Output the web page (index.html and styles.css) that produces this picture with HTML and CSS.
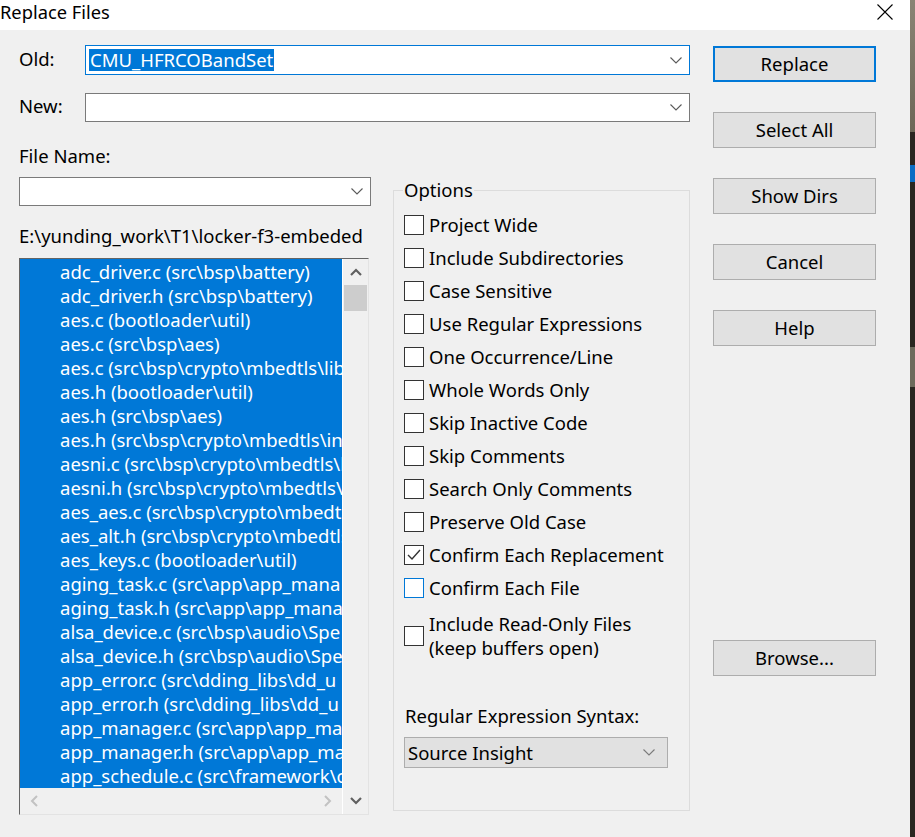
FILE: index.html
```html
<!DOCTYPE html>
<html>
<head>
<meta charset="utf-8">
<link rel="stylesheet" href="styles.css">
</head>
<body>
<div class="screen">
  <div class="dialog">
    <div class="titlebar">
      <span class="title">Replace Files</span>
      <svg class="close" width="16" height="16" viewBox="0 0 16 16"><path d="M0.5 0.5 L15.5 15.5 M15.5 0.5 L0.5 15.5" stroke="#000" stroke-width="1.1" fill="none"/></svg>
    </div>
    <div class="body">
      <div class="main">
        <div class="row row-old">
          <span class="lbl">Old:</span>
          <div class="combo combo-focus">
            <span class="sel">CMU_HFRCOBandSet</span>
            <svg class="chev" width="12" height="7" viewBox="0 0 12 7"><polyline points="0.5,0.5 6,6 11.5,0.5" stroke="#5a5a5a" stroke-width="1.1" fill="none"/></svg>
          </div>
        </div>
        <div class="row row-new">
          <span class="lbl">New:</span>
          <div class="combo">
            <span class="val"></span>
            <svg class="chev" width="12" height="7" viewBox="0 0 12 7"><polyline points="0.5,0.5 6,6 11.5,0.5" stroke="#5a5a5a" stroke-width="1.1" fill="none"/></svg>
          </div>
        </div>
        <div class="lower">
          <div class="leftcol">
            <div class="text fname">File Name:</div>
            <div class="combo combo-file">
              <span class="val"></span>
              <svg class="chev" width="12" height="7" viewBox="0 0 12 7"><polyline points="0.5,0.5 6,6 11.5,0.5" stroke="#5a5a5a" stroke-width="1.1" fill="none"/></svg>
            </div>
            <div class="text path">E:\yunding_work\T1\locker-f3-embeded</div>
            <div class="listbox">
              <div class="listmain">
                <div class="items">
                  <div class="item">adc_driver.c (src\bsp\battery)</div>
                  <div class="item">adc_driver.h (src\bsp\battery)</div>
                  <div class="item">aes.c (bootloader\util)</div>
                  <div class="item">aes.c (src\bsp\aes)</div>
                  <div class="item">aes.c (src\bsp\crypto\mbedtls\lib</div>
                  <div class="item">aes.h (bootloader\util)</div>
                  <div class="item">aes.h (src\bsp\aes)</div>
                  <div class="item">aes.h (src\bsp\crypto\mbedtls\in</div>
                  <div class="item">aesni.c (src\bsp\crypto\mbedtls\l</div>
                  <div class="item">aesni.h (src\bsp\crypto\mbedtls\</div>
                  <div class="item">aes_aes.c (src\bsp\crypto\mbedtl</div>
                  <div class="item">aes_alt.h (src\bsp\crypto\mbedtls</div>
                  <div class="item">aes_keys.c (bootloader\util)</div>
                  <div class="item">aging_task.c (src\app\app_mana</div>
                  <div class="item">aging_task.h (src\app\app_mana</div>
                  <div class="item">alsa_device.c (src\bsp\audio\Spe</div>
                  <div class="item">alsa_device.h (src\bsp\audio\Spe</div>
                  <div class="item">app_error.c (src\dding_libs\dd_u</div>
                  <div class="item">app_error.h (src\dding_libs\dd_u</div>
                  <div class="item">app_manager.c (src\app\app_ma</div>
                  <div class="item">app_manager.h (src\app\app_ma</div>
                  <div class="item">app_schedule.c (src\framework\c</div>
                </div>
                <div class="hscroll">
                  <svg width="8" height="12" viewBox="0 0 8 12"><polyline points="7,1 2,6 7,11" stroke="#c2c2c2" stroke-width="2" fill="none"/></svg>
                  <svg width="8" height="12" viewBox="0 0 8 12"><polyline points="1,1 6,6 1,11" stroke="#c2c2c2" stroke-width="2" fill="none"/></svg>
                </div>
              </div>
              <div class="vscroll">
                <div class="arrow">
                  <svg width="12" height="8" viewBox="0 0 12 8"><polyline points="1,7 6,2 11,7" stroke="#606060" stroke-width="2.2" fill="none"/></svg>
                </div>
                <div class="thumb"></div>
                <div class="vspace"></div>
                <div class="arrow">
                  <svg width="12" height="8" viewBox="0 0 12 8"><polyline points="1,1 6,6 11,1" stroke="#606060" stroke-width="2.2" fill="none"/></svg>
                </div>
              </div>
            </div>
          </div>
          <fieldset class="options">
            <legend>Options</legend>
            <div class="chk"><span class="box"></span><span>Project Wide</span></div>
            <div class="chk"><span class="box"></span><span>Include Subdirectories</span></div>
            <div class="chk"><span class="box"></span><span>Case Sensitive</span></div>
            <div class="chk"><span class="box"></span><span>Use Regular Expressions</span></div>
            <div class="chk"><span class="box"></span><span>One Occurrence/Line</span></div>
            <div class="chk"><span class="box"></span><span>Whole Words Only</span></div>
            <div class="chk"><span class="box"></span><span>Skip Inactive Code</span></div>
            <div class="chk"><span class="box"></span><span>Skip Comments</span></div>
            <div class="chk"><span class="box"></span><span>Search Only Comments</span></div>
            <div class="chk"><span class="box"></span><span>Preserve Old Case</span></div>
            <div class="chk"><span class="box"><svg width="18" height="18" viewBox="0 0 18 18"><polyline points="3,9 7,13 15,4" stroke="#333" stroke-width="1.4" fill="none"/></svg></span><span>Confirm Each Replacement</span></div>
            <div class="chk"><span class="box box-hot"></span><span>Confirm Each File</span></div>
            <div class="chk chk-two"><span class="box"></span><span>Include Read-Only Files<br>(keep buffers open)</span></div>
            <div class="text relabel">Regular Expression Syntax:</div>
            <div class="dropdown">
              <span>Source Insight</span>
              <svg class="chev" width="12" height="7" viewBox="0 0 12 7"><polyline points="0.5,0.5 6,6 11.5,0.5" stroke="#7a7a7a" stroke-width="1.1" fill="none"/></svg>
            </div>
          </fieldset>
        </div>
      </div>
      <div class="buttons">
        <div class="btn btn-default">Replace</div>
        <div class="btn">Select All</div>
        <div class="btn">Show Dirs</div>
        <div class="btn">Cancel</div>
        <div class="btn">Help</div>
        <div class="btn btn-browse">Browse...</div>
      </div>
    </div>
  </div>
  <div class="strip">
    <div class="s1"></div>
    <div class="s2"></div>
    <div class="s3"></div>
    <div class="s4"></div>
    <div class="s5"></div>
  </div>
</div>
</body>
</html>
```

FILE: styles.css
```css
* { box-sizing: border-box; }
html, body { margin: 0; padding: 0; }
body {
  font-family: "Noto Sans", "Open Sans", sans-serif;
  font-size: 18.5px;
  color: #000;
  background: #2a2620;
}
.screen { display: flex; width: 915px; height: 837px; overflow: hidden; }
.dialog { width: 910px; height: 837px; background: #f0f0f0; display: flex; flex-direction: column; }
.titlebar {
  height: 30px; background: #fff; display: flex; align-items: center;
  justify-content: space-between; padding: 0 17px 0 0;
}
.title { font-size: 18.3px; line-height: 24px; margin-top: -7px; }
.close { margin-top: -6px; }
.body { display: flex; padding-left: 19px; }
.main { width: 671px; display: flex; flex-direction: column; }
.row { display: flex; align-items: center; }
.row-old { margin-top: 15px; height: 30px; }
.row-new { margin-top: 18px; height: 29px; }
.lbl { width: 66px; line-height: 24px; margin-top: -3px; }
.combo {
  flex: 1; height: 100%; background: #fff; border: 1px solid #7a7a7a;
  display: flex; align-items: center; justify-content: space-between; padding: 0 7px 0 3px;
}
.combo-focus { border-color: #0078d7; }
.sel { background: #0078d7; color: #fff; line-height: 22px; padding: 0 1px; }
.chev { flex: none; }
.lower { display: flex; }
.leftcol { width: 352px; display: flex; flex-direction: column; }
.text { line-height: 24px; }
.fname { margin-top: 22px; }
.combo-file { flex: none; height: 29px; margin-top: 9px; }
.path { margin-top: 18px; white-space: nowrap; }
.listbox {
  margin-top: 10px; width: 350px; height: 557px; display: flex;
  border-style: solid; border-width: 1px; border-color: #646464 #e3e3e3 #e3e3e3 #646464;
  background: #f0f0f0;
}
.listmain { width: 323px; display: flex; flex-direction: column; border-right: 1px solid #fff; }
.items { height: 529px; background: #0078d7; overflow: hidden; padding-top: 1px; }
.item { color: #fff; line-height: 24px; white-space: nowrap; overflow: hidden; padding-left: 40px; }
.hscroll { flex: 1; display: flex; justify-content: space-between; align-items: center; padding: 0 10px 0 10px; }
.vscroll { flex: 1; display: flex; flex-direction: column; }
.arrow { height: 26px; display: flex; align-items: center; justify-content: center; }
.thumb { height: 26px; background: #cdcdcd; margin: 0 1px; }
.vspace { flex: 1; }
.options {
  margin: 56px 0 0 22px; width: 297px; height: 633px;
  border: 1px solid #dcdcdc; padding: 0 10px; min-width: 0;
}
.options legend { padding: 0 1px; margin-left: -1px; line-height: 24px; margin-top: -2px; }
.chk { display: flex; align-items: center; height: 33px; gap: 5px; white-space: nowrap; }
.chk:first-of-type { margin-top: 6px; }
.box {
  width: 20px; height: 20px; border: 1px solid #333; background: #fff; flex: none;
  display: flex; align-items: center; justify-content: center;
}
.box-hot { border-color: #0078d7; }
.chk-two { height: 48px; margin-top: 8px; line-height: 24px; }
.relabel { margin-top: 44px; margin-left: 1px; white-space: nowrap; }
.dropdown {
  margin-top: 9px; width: 264px; height: 31px; background: #e1e1e1; border: 1px solid #adadad;
  display: flex; align-items: center; justify-content: space-between; padding: 0 12px 0 3px;
}
.buttons { margin-left: 23px; width: 163px; display: flex; flex-direction: column; gap: 30px; padding-top: 16px; }
.btn {
  height: 36px; background: #e1e1e1; border: 1px solid #adadad;
  display: flex; align-items: center; justify-content: center; line-height: 24px;
}
.btn-default { border: 2px solid #0078d7; }
.btn-browse { margin-top: 264px; }
.strip { flex: 1; display: flex; flex-direction: column; }
.s1 { height: 132px; background: linear-gradient(#8a8474, #6c6757); }
.s2 { height: 33px; }
.s3 { height: 17px; background: #0a6cc4; }
.s4 { height: 165px; }
.s5 { height: 40px; background: #6e6a5c; }
```
